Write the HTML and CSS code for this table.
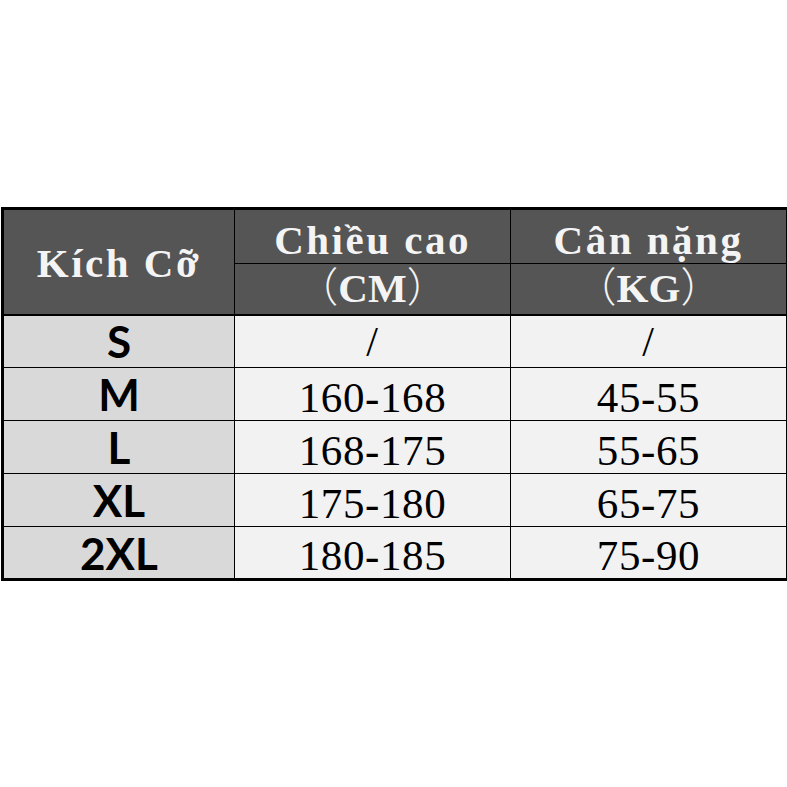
FILE: index.html
```html
<!DOCTYPE html>
<html lang="vi">
<head>
<meta charset="utf-8">
<title>Bảng kích cỡ</title>
<link rel="stylesheet" href="styles.css">
</head>
<body>
<table class="size-table">
  <colgroup>
    <col class="col-size">
    <col class="col-height">
    <col class="col-weight">
  </colgroup>
  <thead>
    <tr class="head-top">
      <th rowspan="2" class="head-size">Kích Cỡ</th>
      <th class="head-label">Chiều cao</th>
      <th class="head-label">Cân nặng</th>
    </tr>
    <tr class="head-bottom">
      <th class="head-unit"><span class="paren">（</span>CM<span class="paren">）</span></th>
      <th class="head-unit"><span class="paren">（</span>KG<span class="paren">）</span></th>
    </tr>
  </thead>
  <tbody>
    <tr><td class="size">S</td><td class="val slash">/</td><td class="val slash">/</td></tr>
    <tr><td class="size">M</td><td class="val">160-168</td><td class="val">45-55</td></tr>
    <tr><td class="size">L</td><td class="val">168-175</td><td class="val">55-65</td></tr>
    <tr><td class="size">XL</td><td class="val">175-180</td><td class="val">65-75</td></tr>
    <tr><td class="size">2XL</td><td class="val">180-185</td><td class="val">75-90</td></tr>
  </tbody>
</table>
</body>
</html>
```

FILE: styles.css
```css
html, body {
  margin: 0;
  padding: 0;
  background: #ffffff;
}

body {
  padding-top: 207px;
  padding-left: 1px;
}

.size-table {
  border-collapse: collapse;
  table-layout: fixed;
  width: 785px;
  border: 3px solid #000000;
}

.col-size { width: 232px; }
.col-height { width: 276px; }
.col-weight { width: 277px; }

th, td {
  padding: 0;
  text-align: center;
  vertical-align: middle;
  border: 1px solid #000000;
}

thead th {
  background: #555555;
  color: #f4f4f4;
  font-family: "Liberation Serif", "Noto Sans CJK SC", serif;
  font-weight: 700;
  font-size: 41px;
  letter-spacing: 2.5px;
  line-height: 1;
}

.head-top { height: 55px; }
.head-bottom { height: 51px; }

.head-bottom th,
.head-size {
  border-bottom: 2px solid #000000;
}

.head-size {
  padding-top: 4px;
}

.head-label {
  vertical-align: bottom;
  padding-bottom: 2px;
}

.head-unit {
  vertical-align: top;
  padding-top: 4px;
  letter-spacing: 0;
}

.paren {
  font-weight: 300;
}

tbody tr { height: 53px; }

.size {
  background: #d9d9d9;
  color: #000000;
  font-family: Lato, "Open Sans", sans-serif;
  font-weight: 700;
  font-size: 44px;
  line-height: 1;
}

.val {
  background: #f2f2f2;
  color: #000000;
  font-family: "Liberation Serif", serif;
  font-size: 43px;
  letter-spacing: 0.6px;
  line-height: 1;
  padding-top: 6px;
}

.slash {
  font-size: 42px;
  padding-top: 2px;
  font-weight: 400;
}
```
